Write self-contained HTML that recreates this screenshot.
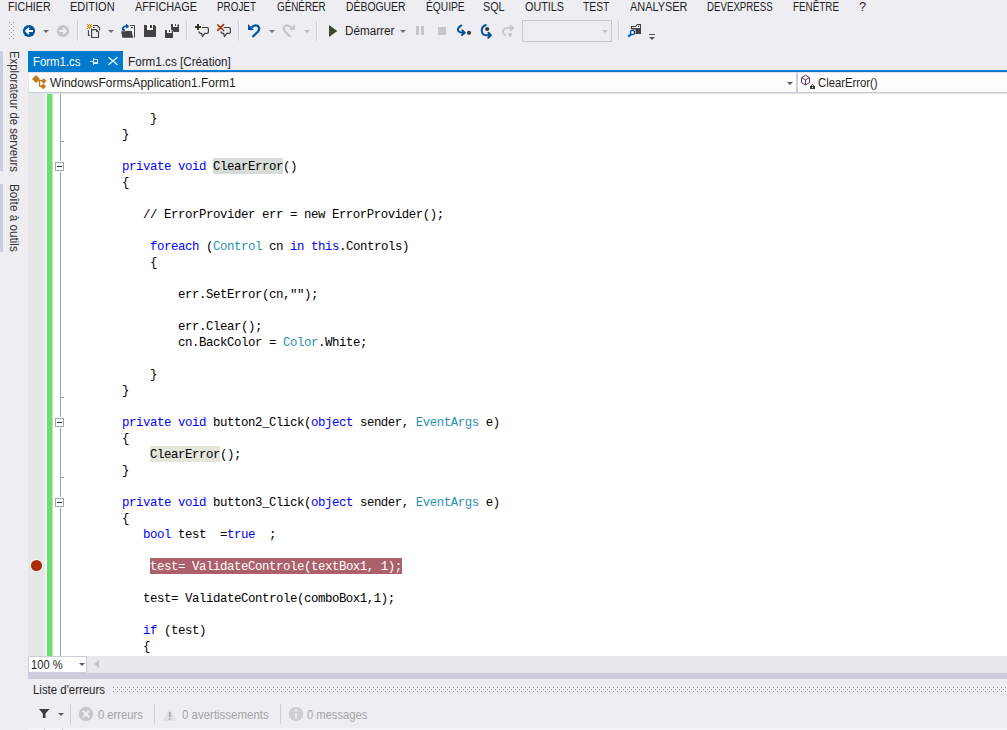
<!DOCTYPE html>
<html lang="fr">
<head>
<meta charset="utf-8">
<title>Form1.cs - WindowsFormsApplication1</title>
<style>
*{box-sizing:border-box;margin:0;padding:0}
html,body{width:1007px;height:730px;overflow:hidden;background:#EEEEF2}
body{position:relative;font-family:"Liberation Sans",sans-serif;font-size:12px;color:#1E1E1E}
.abs{position:absolute}
.t{position:absolute;white-space:pre;line-height:16px;height:16px}
/* menu */
.menu .t{top:-1px;font-size:12px;color:#1E1E1E}
/* toolbar */
.sep{position:absolute;width:1px;background:#CCCEDB}
svg{position:absolute;overflow:visible}
/* side tabs */
.side{position:absolute;left:0;width:3px;background:#CCCEDB}
.vt{position:absolute;white-space:pre;font-size:12px;line-height:16px;height:16px;transform-origin:0 0;transform:rotate(90deg);color:#333}
/* editor */
#ed{position:absolute;left:28px;top:94px;width:979px;height:562px;background:#fff;overflow:hidden}
#ed .mg{position:absolute;left:0;top:0;width:17px;height:100%;background:#E6E7E8}
#ed .gr{position:absolute;left:19px;top:0;width:5px;height:100%;background:#6CE26C;border-right:0}
#ed .gr2{position:absolute;left:24px;top:0;width:1px;height:100%;background:#B4F0B4}
#ed .ol{position:absolute;left:32px;top:0;width:1px;height:100%;background:#A5A5A5}
.box{position:absolute;left:27px;width:9px;height:9px;border:1px solid #A5A5A5;background:#fff;box-shadow:0 0 0 1px #fff}
.box i{position:absolute;left:1px;top:3px;width:5px;height:1px;background:#333}
.tick{position:absolute;left:32px;width:4px;height:1px;background:#A5A5A5}
.ln{position:absolute;left:38px;white-space:pre;font-family:"Liberation Mono",monospace;font-size:12.4px;letter-spacing:-0.44px;line-height:16px;height:16px;color:#000}
.k{color:#0000FF}.c{color:#2B91AF}
.hl,.hl2,.bp{display:inline-block;height:16px;vertical-align:top;margin-top:-1px;padding-top:1px}
.hl{background:#D8DCD8}
.hl2{background:#E4E6DA}
.bp{background:#AB616B;color:#fff}
#m1{left:8.3px !important;transform:scaleX(0.8872);transform-origin:0 0}
#m2{left:70.3px !important;transform:scaleX(0.9167);transform-origin:0 0}
#m3{left:135.0px !important;transform:scaleX(0.9015);transform-origin:0 0}
#m4{left:217.3px !important;transform:scaleX(0.8234);transform-origin:0 0}
#m5{left:277.3px !important;transform:scaleX(0.8203);transform-origin:0 0}
#m6{left:346.0px !important;transform:scaleX(0.8676);transform-origin:0 0}
#m7{left:425.7px !important;transform:scaleX(0.8511);transform-origin:0 0}
#m8{left:483.4px !important;transform:scaleX(0.8955);transform-origin:0 0}
#m9{left:525.0px !important;transform:scaleX(0.9);transform-origin:0 0}
#m10{left:583.14px !important;transform:scaleX(0.8621);transform-origin:0 0}
#m11{left:630.0px !important;transform:scaleX(0.9095);transform-origin:0 0}
#m12{left:707.3px !important;transform:scaleX(0.8074);transform-origin:0 0}
#m13{left:793.3px !important;transform:scaleX(0.8214);transform-origin:0 0}
#m14{left:858.64px !important;transform:scaleX(1.06);transform-origin:0 0}
#tab1{left:32.5px !important;transform:scaleX(0.95);transform-origin:0 0}
#tab2{left:127.8px !important;transform:scaleX(0.9752);transform-origin:0 0}
#nav1{left:49.5px !important;transform:scaleX(0.9973);transform-origin:0 0}
#nav2{left:818.4px !important;transform:scaleX(0.9413);transform-origin:0 0}
#zoom{left:30.77px !important;transform:scaleX(0.9273);transform-origin:0 0}
#el{left:32.5px !important;transform:scaleX(0.9513);transform-origin:0 0}
#e1{left:97.6px !important;transform:scaleX(0.9354);transform-origin:0 0}
#e2{left:181.5px !important;transform:scaleX(0.956);transform-origin:0 0}
#e3{left:307.0px !important;transform:scaleX(0.9308);transform-origin:0 0}
#dem{left:345.3px !important;transform:scaleX(0.974);transform-origin:0 0}

</style>
</head>
<body>
<!-- MENU -->
<div class="menu">
<span class="t" id="m1" style="left:8px">FICHIER</span>
<span class="t" id="m2" style="left:70px">EDITION</span>
<span class="t" id="m3" style="left:135px">AFFICHAGE</span>
<span class="t" id="m4" style="left:217px">PROJET</span>
<span class="t" id="m5" style="left:277px">GÉNÉRER</span>
<span class="t" id="m6" style="left:346px">DÉBOGUER</span>
<span class="t" id="m7" style="left:425px">ÉQUIPE</span>
<span class="t" id="m8" style="left:484px">SQL</span>
<span class="t" id="m9" style="left:525px">OUTILS</span>
<span class="t" id="m10" style="left:584px">TEST</span>
<span class="t" id="m11" style="left:630px">ANALYSER</span>
<span class="t" id="m12" style="left:707px">DEVEXPRESS</span>
<span class="t" id="m13" style="left:793px">FENÊTRE</span>
<span class="t" id="m14" style="left:860px">?</span>
</div>
<!-- TOOLBAR -->
<svg id="tbsvg" width="1007" height="50" viewBox="0 0 1007 50" style="left:0;top:0" shape-rendering="auto">
<defs>
<pattern id="grip" x="9" y="22" width="4" height="4" patternUnits="userSpaceOnUse"><rect x="0" y="0" width="1" height="1" fill="#999"/><rect x="2" y="2" width="1" height="1" fill="#999"/></pattern>
<path id="dd" d="M-3 0h6l-3 3z"/>
</defs>
<rect x="9" y="22" width="5" height="17" fill="url(#grip)"/>
<!-- back -->
<circle cx="29" cy="31" r="6.100" fill="#00539C"/>
<path d="M26 31h7M29 28l-3 3 3 3" stroke="#fff" stroke-width="1.8" fill="none"/>
<use href="#dd" x="46" y="30" fill="#6D6D78"/>
<!-- forward disabled -->
<circle cx="63" cy="31" r="6.100" fill="#C2C3C9"/>
<path d="M59 31h7M63 28l3 3-3 3" stroke="#EEEEF2" stroke-width="1.8" fill="none"/>
<rect x="77" y="21" width="1" height="20" fill="#CCCEDB"/><rect x="78" y="21" width="1" height="20" fill="#F7F7F9"/>
<!-- new project -->
<g>
<rect x="88" y="25" width="3" height="3" fill="#F5E08A"/><g fill="#D18B0F"><rect x="87" y="24" width="1" height="1"/><rect x="89" y="24" width="1" height="1"/><rect x="91" y="24" width="1" height="1"/><rect x="88" y="25" width="1" height="1"/><rect x="90" y="25" width="1" height="1"/><rect x="87" y="26" width="1" height="1"/><rect x="91" y="26" width="1" height="1"/><rect x="88" y="27" width="1" height="1"/><rect x="90" y="27" width="1" height="1"/><rect x="87" y="28" width="1" height="1"/><rect x="89" y="28" width="1" height="1"/><rect x="91" y="28" width="1" height="1"/></g><rect x="89" y="25" width="1" height="1" fill="#E2A93A"/><rect x="89" y="27" width="1" height="1" fill="#E2A93A"/><rect x="88" y="26" width="1" height="1" fill="#E2A93A"/><rect x="90" y="26" width="1" height="1" fill="#E2A93A"/>
<path d="M93 25.500h4.300l2.200 2.200v2.800" stroke="#424242" stroke-width="1.100" fill="none"/>
<path d="M93 27.500h1.600" stroke="#424242" stroke-width="1" fill="none"/>
<path d="M88.500 30.200v5.300h1.500" stroke="#424242" stroke-width="1.100" fill="none"/>
<path d="M91.600 29.600h4.600l2.300 2.300v5.600h-6.900z" stroke="#424242" stroke-width="1.200" fill="#EBEBEC"/>
<path d="M96 29.600v2.500h2.500z" fill="#424242"/>
</g>
<use href="#dd" x="111" y="30" fill="#6D6D78"/>
<!-- open -->
<g>
<rect x="130" y="26" width="4.500" height="11.500" fill="#F4F4F5"/>
<path d="M130 25.500h4.500v12" stroke="#424242" stroke-width="1" fill="none"/>
<rect x="131" y="27" width="2" height="1" fill="#424242"/>
<path d="M121 31.300h5l0.300-0.300h5.400l1.500 6.700h-10.700z" fill="#424242"/>
<path d="M125 30.200Q122.300 30.400 122.900 28.100Q123.500 26.200 127 26.200" stroke="#0054A6" stroke-width="1.800" fill="none"/>
<path d="M126 23.700l3.400 2.500-3.400 2.500z" fill="#0054A6"/>
</g>
<!-- save -->
<rect x="147" y="25" width="6" height="5" fill="#F6F6F7"/>
<path d="M144 25h3v5h6v-5h1.500l1.500 1.500v10.500h-12z M150 25h2v3h-2z" fill="#424242"/>
<!-- save all -->
<rect x="173" y="24" width="4.500" height="3" fill="#F6F6F7"/>
<path d="M171 24h2v3h4.500v-3h0.500l1 1v7h-8z M175 24h1v2h-1z" fill="#424242"/>
<path d="M165 30h2v3h4.500v-3h0.500l1 1v7h-8z" fill="#424242" stroke="#EEEEF2" stroke-width="0.800" paint-order="stroke"/>
<rect x="167" y="30" width="4.500" height="3" fill="#F6F6F7"/>
<rect x="169" y="30" width="1" height="2" fill="#424242"/>
<rect x="186" y="21" width="1" height="20" fill="#CCCEDB"/><rect x="187" y="21" width="1" height="20" fill="#F7F7F9"/>
<!-- comment -->
<path d="M201.8 27.500h5.200q1.400 0 1.400 1.400v3q0 1.400-1.400 1.400h-2.300l-2.300 3.300l-0.700-3.300h-1q-1.700 0-1.700-2" stroke="#424242" stroke-width="1.200" fill="#EBEBEC" stroke-linejoin="round"/>
<path d="M195 27h6M198 24v6" stroke="#2D3A24" stroke-width="2" fill="none"/>
<!-- uncomment -->
<path d="M223.8 27.500h5.200q1.400 0 1.400 1.400v3q0 1.400-1.400 1.400h-2.300l-2.300 3.300l-0.700-3.300h-1q-1.700 0-1.700-2" stroke="#424242" stroke-width="1.200" fill="#EBEBEC" stroke-linejoin="round"/>
<path d="M217.800 25l5.800 5.500M223.600 24.700l-5.800 5.700" stroke="#AE3309" stroke-width="1.700" fill="none" stroke-linecap="round"/>
<rect x="238" y="21" width="1" height="20" fill="#CCCEDB"/><rect x="239" y="21" width="1" height="20" fill="#F7F7F9"/>
<!-- undo -->
<path d="M248 24v6h6z" fill="#00539C"/>
<path d="M251.500 27.500q3-3.500 6.500-1.500q2.500 2.500 0 5.500l-5.500 5.500" stroke="#00539C" stroke-width="2.200" fill="none"/>
<use href="#dd" x="272" y="30" fill="#6D6D78"/>
<!-- redo disabled -->
<path d="M295 24v6h-6z" fill="#C6C7CC"/>
<path d="M291.500 27.500q-3-3.500-6.500-1.500q-2.500 2.500 0 5.500l5.500 5.500" stroke="#C6C7CC" stroke-width="2.200" fill="none"/>
<use href="#dd" x="307" y="30" fill="#B9BAC1"/>
<rect x="316" y="21" width="1" height="20" fill="#CCCEDB"/><rect x="317" y="21" width="1" height="20" fill="#F7F7F9"/>
<!-- start -->
<path d="M329 25v12l8.300-6z" fill="#3A472E"/>
<use href="#dd" x="403" y="30" fill="#6D6D78"/>
<!-- pause / stop -->
<rect x="416" y="26" width="3" height="9" fill="#C6C6C8"/><rect x="421" y="26" width="3" height="9" fill="#C6C6C8"/>
<rect x="438" y="27" width="8" height="8" fill="#C6C6C8"/>
<!-- step into -->
<path d="M461.200 25.600Q456.500 28.500 458.400 31.200Q460 33 464 32.800M462.300 30.400L464.800 32.800L462 35.100" stroke="#00539C" stroke-width="2" fill="none" stroke-linecap="round" stroke-linejoin="round"/>
<circle cx="469" cy="32.800" r="2.100" fill="#3B3B3B"/>
<!-- step over -->
<path d="M485.800 25Q481.200 27 481.800 31Q482.300 35.300 486 35.300H490M488.500 32.800L490.900 35.300L488.300 37.800" stroke="#00539C" stroke-width="2" fill="none" stroke-linecap="round" stroke-linejoin="round"/>
<circle cx="487.200" cy="29" r="2.100" fill="#3B3B3B"/>
<!-- step out disabled -->
<path d="M512.500 28H507Q503.200 28.300 503 31.500Q503.100 34 505.300 35.200M510.600 25.700L513.100 28L510.600 30.300" stroke="#C8C8CA" stroke-width="2" fill="none" stroke-linecap="round" stroke-linejoin="round"/>
<circle cx="510" cy="34.800" r="2.100" fill="#C8C8CA"/>
<!-- combo -->
<rect x="522.500" y="20.500" width="89" height="21" fill="#EEEEF2" stroke="#C6C6CC" stroke-width="1"/>
<use href="#dd" x="605" y="30" fill="#C0C0C6"/>
<rect x="618" y="21" width="1" height="20" fill="#CCCEDB"/><rect x="619" y="21" width="1" height="20" fill="#F7F7F9"/>
<!-- find in files -->
<path d="M631 26h4.500l1.500-2h4v10h-5.500v-4.500h-4.500z" fill="#424242"/>
<path d="M632 26.900h4l1.300-1.700h2.600v2.700h-7.900z" fill="#FAFAFA"/>
<circle cx="638.500" cy="26.500" r="0.600" fill="#424242"/>
<circle cx="632.500" cy="32.500" r="2.100" fill="#F4F4F6" stroke="#0054A6" stroke-width="1.300"/>
<path d="M631 34.200l-2.700 2.600" stroke="#0054A6" stroke-width="1.900" fill="none"/>
<!-- overflow -->
<rect x="649" y="34" width="6" height="1" fill="#555566"/>
<path d="M649 37h6l-3 3z" fill="#555566"/>
</svg>
<span class="t" id="dem" style="left:345px;top:23px">Démarrer</span>

<!-- SIDE TABS -->
<div class="side" style="top:51px;height:120px"></div>
<div class="side" style="top:184px;height:68px"></div>
<span class="vt" id="v1" style="left:21.6px;top:51px;transform:rotate(90deg) scaleX(0.949)">Explorateur de serveurs</span>
<span class="vt" id="v2" style="left:21.6px;top:184px;transform:rotate(90deg) scaleX(0.978)">Boîte à outils</span>
<!-- TABS -->
<div class="abs" style="left:28px;top:51px;width:95px;height:20px;background:#007ACC"></div>
<div class="abs" style="left:28px;top:70px;width:979px;height:2px;background:#007ACC"></div>
<span class="t" id="tab1" style="left:32px;top:54px;color:#fff">Form1.cs</span>
<span class="t" id="tab2" style="left:127px;top:54px">Form1.cs [Création]</span>
<!-- NAV BAR -->
<div class="abs" style="left:28px;top:72px;width:979px;height:22px;background:#E4E5EE"></div>
<div class="abs" style="left:28px;top:92px;width:979px;height:1px;background:#CCCEDB"></div>
<div class="abs" style="left:28px;top:93px;width:979px;height:1px;background:#DFE0E8"></div>
<div class="abs" style="left:29px;top:73px;width:767px;height:19px;background:#FDFDFD"></div>
<div class="abs" style="left:796px;top:72px;width:2px;height:21px;background:#CCCEDB"></div>
<div class="abs" style="left:798px;top:73px;width:209px;height:19px;background:#FDFDFD"></div>
<span class="t" id="nav1" style="left:49px;top:75px">WindowsFormsApplication1.Form1</span>
<span class="t" id="nav2" style="left:818px;top:75px">ClearError()</span>
<!-- EDITOR -->
<div id="ed">
<div class="mg"></div><div class="gr"></div><div class="gr2"></div><div class="ol"></div>
<div class="ln" style="left:122px;top:17px">}</div>
<div class="ln" style="left:94px;top:33px">}</div>
<div class="ln" style="left:94px;top:65px"><span class="k">private</span> <span class="k">void</span> <span class="hl">ClearError</span>()</div>
<div class="ln" style="left:94px;top:81px">{</div>
<div class="ln" style="left:115px;top:113px">// ErrorProvider err = new ErrorProvider();</div>
<div class="ln" style="left:122px;top:145px"><span class="k">foreach</span> (<span class="c">Control</span> cn <span class="k">in</span> <span class="k">this</span>.Controls)</div>
<div class="ln" style="left:122px;top:161px">{</div>
<div class="ln" style="left:150px;top:193px">err.SetError(cn,"");</div>
<div class="ln" style="left:150px;top:225px">err.Clear();</div>
<div class="ln" style="left:150px;top:241px">cn.BackColor = <span class="c">Color</span>.White;</div>
<div class="ln" style="left:122px;top:273px">}</div>
<div class="ln" style="left:94px;top:289px">}</div>
<div class="ln" style="left:94px;top:321px"><span class="k">private</span> <span class="k">void</span> button2_Click(<span class="k">object</span> sender, <span class="c">EventArgs</span> e)</div>
<div class="ln" style="left:94px;top:337px">{</div>
<div class="ln" style="left:122px;top:353px"><span class="hl2">ClearError</span>();</div>
<div class="ln" style="left:94px;top:369px">}</div>
<div class="ln" style="left:94px;top:401px"><span class="k">private</span> <span class="k">void</span> button3_Click(<span class="k">object</span> sender, <span class="c">EventArgs</span> e)</div>
<div class="ln" style="left:94px;top:417px">{</div>
<div class="ln" style="left:115px;top:433px"><span class="k">bool</span> test  =<span class="k">true</span>  ;</div>
<div class="ln" style="left:122px;top:465px"><span class="bp">test= ValidateControle(textBox1, 1);</span></div>
<div class="ln" style="left:115px;top:497px">test= ValidateControle(comboBox1,1);</div>
<div class="ln" style="left:115px;top:529px"><span class="k">if</span> (test)</div>
<div class="ln" style="left:115px;top:545px">{</div>
<div class="box" style="top:68px"><i></i></div>
<div class="box" style="top:324px"><i></i></div>
<div class="box" style="top:404px"><i></i></div>
<div class="tick" style="top:47px"></div>
<div class="tick" style="top:303px"></div>
<div class="tick" style="top:383px"></div>
</div>
<!-- BOTTOM -->
<div class="abs" style="left:28px;top:656px;width:979px;height:17px;background:#E8E8EC"></div>
<div class="abs" style="left:28px;top:656px;width:59px;height:17px;background:#fff;border:1px solid #CCCEDB"></div>
<span class="t" id="zoom" style="left:32px;top:657px">100 %</span>
<div class="abs" style="left:28px;top:673px;width:979px;height:6px;background:#CCCEDB"></div>
<span class="t" id="el" style="left:32px;top:682px">Liste d'erreurs</span>
<span class="t" id="e1" style="left:98px;top:707px;color:#A2A4A5">0 erreurs</span>
<span class="t" id="e2" style="left:181px;top:707px;color:#A2A4A5">0 avertissements</span>
<span class="t" id="e3" style="left:307px;top:707px;color:#A2A4A5">0 messages</span>
<svg id="ov" width="1007" height="730" viewBox="0 0 1007 730" style="left:0;top:0;pointer-events:none">
<defs>
<pattern id="grip2" x="113" y="687" width="4" height="4" patternUnits="userSpaceOnUse"><rect x="0" y="0" width="1" height="1" fill="#999"/><rect x="2" y="2" width="1" height="1" fill="#999"/></pattern>
<path id="dd2" d="M-3 0h6l-3 3z"/>
</defs>
<!-- pin -->
<g fill="#D8EAF7"><rect x="90" y="61" width="3" height="1"/><rect x="93" y="58" width="1" height="7"/><rect x="94" y="59" width="4" height="1"/><rect x="94" y="62" width="4" height="2"/><rect x="97" y="59" width="1" height="5"/></g>
<!-- close X -->
<path d="M108.500 57.300l9 7.500M117.500 57.300l-9 7.500" stroke="#E4F0FA" stroke-width="1.400" fill="none"/>
<!-- class icon -->
<g fill="#C27D1A"><path d="M36 75l4 4-4 4-4-4z"/><path d="M43.700 78.200l2.800 2.800-2.800 2.800-2.800-2.800z"/><path d="M43.300 83.600l2.800 2.800-2.800 2.800-2.800-2.800z"/></g>
<path d="M38 80.500h4M39.500 80.500v5.500h2.500" stroke="#C27D1A" stroke-width="1.300" fill="none"/>
<!-- nav arrows -->
<use href="#dd2" x="790" y="82" fill="#5C5C68"/>
<!-- method cube -->
<path d="M805.500 75.300l4 2.300v5l-4 2.400-4-2.400v-5z M805.500 85v-5.200M805.500 79.800l-3.600-2M805.500 79.800l3.600-2" stroke="#652D5A" stroke-width="1" fill="none"/>
<path d="M810 86h5v3h-5z" fill="#3A3A38"/><path d="M811.500 86v-0.800q1-1.400 2 0v0.800" stroke="#3A3A38" stroke-width="1" fill="none"/><rect x="812" y="87" width="1" height="1" fill="#fff"/>
<!-- breakpoint -->
<circle cx="36.500" cy="565.500" r="6.200" fill="#fff"/><circle cx="36.500" cy="565.500" r="5.600" fill="#A82E0A"/>
<!-- zoom combo arrow + scroll arrow -->
<use href="#dd2" x="82" y="663" fill="#5C5C68"/>
<path d="M99 660v8l-4.500-4z" fill="#C2C3C9"/>
<!-- error list grip -->
<rect x="113" y="687" width="894" height="5" fill="url(#grip2)"/>
<!-- filter -->
<path d="M39 709h10.500l-4 4.500v4.500h-2.700v-4.500z" fill="#3B3B3B"/>
<use href="#dd2" x="61" y="713" fill="#5C5C68"/>
<rect x="70" y="704" width="1" height="20" fill="#CCCEDB"/>
<rect x="154" y="704" width="1" height="20" fill="#CCCEDB"/>
<rect x="280" y="704" width="1" height="20" fill="#CCCEDB"/>
<!-- error icon -->
<circle cx="86" cy="714" r="7.200" fill="#C6C6C8"/><path d="M82.800 710.800l6.400 6.400M89.200 710.800l-6.400 6.400" stroke="#EEEEF2" stroke-width="2.200" fill="none"/>
<!-- warning icon -->
<path d="M169.700 707.500l7 13.500h-14z" fill="#E2E2E6"/><rect x="169" y="712" width="1.600" height="5" fill="#A0A0A4"/><rect x="169" y="718" width="1.600" height="1.600" fill="#A0A0A4"/>
<!-- info icon -->
<circle cx="296" cy="714" r="7.200" fill="#CFCFD2"/><rect x="295" y="713" width="2" height="5.500" fill="#EEEEF2"/><rect x="295" y="709.500" width="2" height="2" fill="#EEEEF2"/>
<!-- bottom strip -->
<rect x="28" y="728" width="979" height="2" fill="#F5F5F7"/><rect x="44" y="728" width="1" height="2" fill="#CCCEDB"/><rect x="62" y="728" width="1" height="2" fill="#CCCEDB"/>
</svg>
</body>
</html>
